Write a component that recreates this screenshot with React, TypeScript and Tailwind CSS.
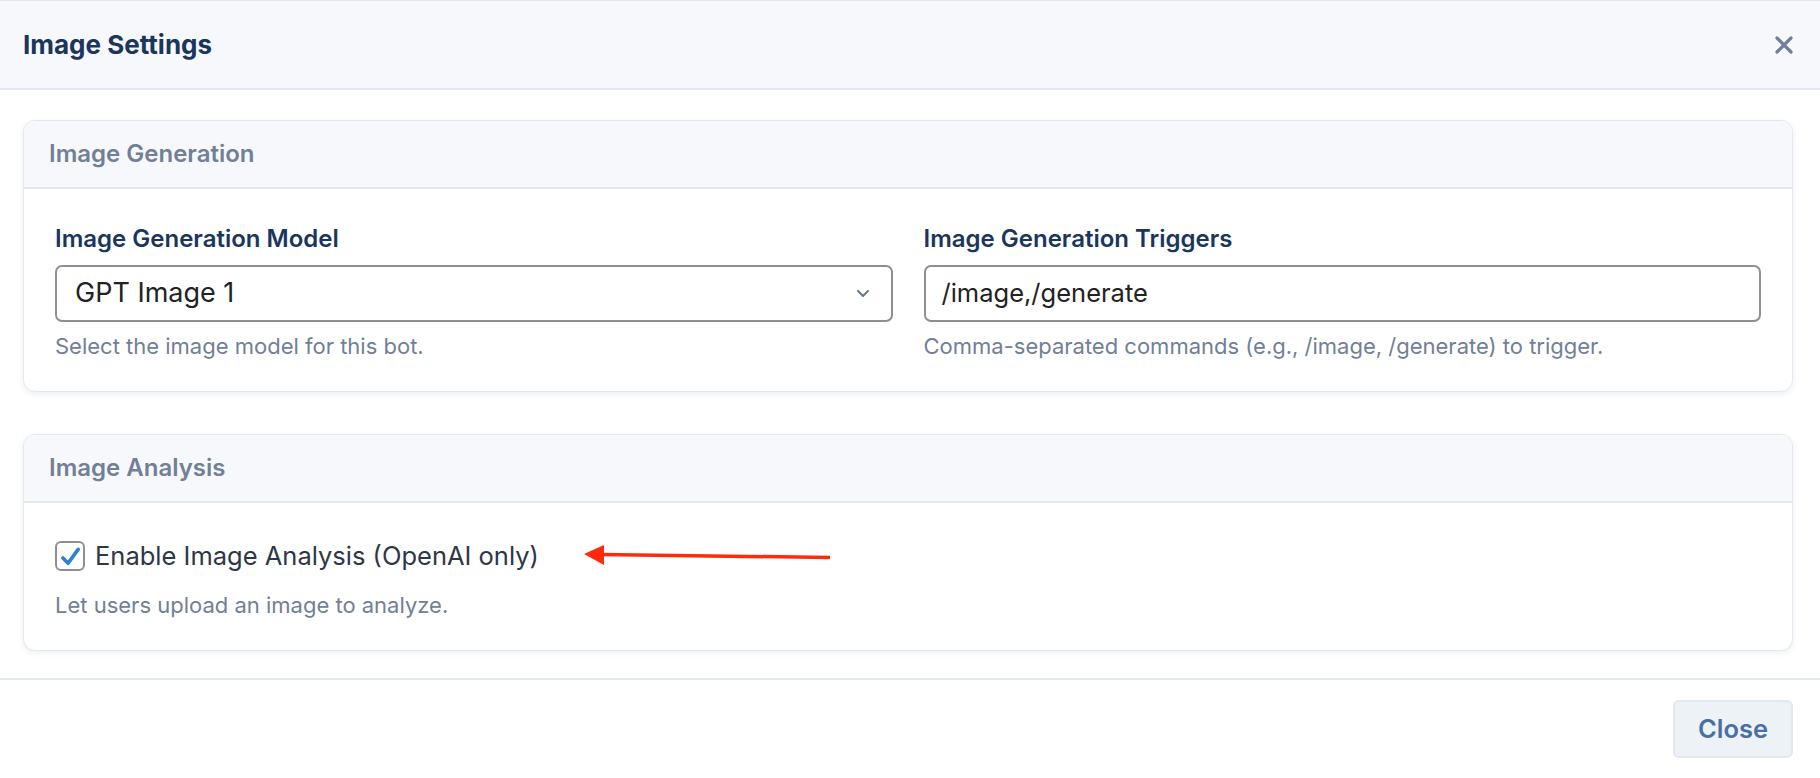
const font = "font-['Inter','Noto_Sans',sans-serif]";

function Card({ title, children }: { title: string; children: React.ReactNode }) {
    return (
        <section className="rounded-[12px] border border-[#e2e8f0] bg-white shadow-[0_2px_6px_rgba(30,50,90,0.08)] overflow-hidden">
            <div className="h-[68px] flex items-center px-[25px] bg-[#f7f8fb] border-b-2 border-[#e2e8f0]">
                <h3 className="text-[24px] font-semibold text-[#718096]">{title}</h3>
            </div>
            {children}
        </section>
    );
}

function Field({ label, hint, children }: { label: string; hint: string; children: React.ReactNode }) {
    return (
        <div className="flex flex-col">
            <label className="text-[24px] leading-[30px] font-semibold text-[#1a365d]">{label}</label>
            <div className="mt-[11px]">{children}</div>
            <p className="mt-[10px] text-[22px] leading-[28px] text-[#718096]">{hint}</p>
        </div>
    );
}

export default function App() {
    return (
        <div className={`w-[1820px] h-[778px] bg-white flex flex-col ${font}`}>
            {/* modal header */}
            <header className="h-[90px] shrink-0 flex items-center justify-between pl-[23px] pr-[27px] bg-[#f7f8fb] border-t border-b-2 border-[#e2e8f0]">
                <h2 className="text-[26px] font-bold text-[#1a365d]">Image Settings</h2>
                <svg viewBox="0 0 18 18" className="w-[18px] h-[18px]">
                    <path d="M2 2 L16 16 M16 2 L2 16" stroke="#718096" strokeWidth={3.2} strokeLinecap="round" />
                </svg>
            </header>

            <main className="flex-1 flex flex-col gap-[42px] pl-[23px] pr-[27px] pt-[30px]">
                <Card title="Image Generation">
                    <div className="grid grid-cols-2 gap-[31px] px-[31px] pt-[35px] pb-[31px]">
                        <Field label="Image Generation Model" hint="Select the image model for this bot.">
                            <div className="h-[57px] flex items-center justify-between rounded-[7px] border-2 border-[#8e8e93] pl-[18px] pr-[22px]">
                                <span className="text-[27px] text-[#222]">GPT Image 1</span>
                                <svg viewBox="0 0 12 7" className="w-[12px] h-[7px]">
                                    <path d="M1 1 L6 6 L11 1" fill="none" stroke="#6b7a90" strokeWidth={2} strokeLinecap="round" strokeLinejoin="round" />
                                </svg>
                            </div>
                        </Field>
                        <Field
                            label="Image Generation Triggers"
                            hint="Comma-separated commands (e.g., /image, /generate) to trigger."
                        >
                            <div className="h-[57px] flex items-center rounded-[7px] border-2 border-[#8e8e93] px-[16px]">
                                <span className="text-[25.5px] text-[#222]">/image,/generate</span>
                            </div>
                        </Field>
                    </div>
                </Card>

                <Card title="Image Analysis">
                    <div className="px-[31px] pt-[38px] pb-[31px]">
                        <div className="flex items-center h-[30px]">
                            <span className="w-[30px] h-[30px] rounded-[6px] border-2 border-[#8e8e93] bg-white flex items-center justify-center">
                                <svg viewBox="0 0 24 24" className="w-[23px] h-[23px]">
                                    <path
                                        d="M4 13.5 L9.5 19 L20 4.5"
                                        fill="none"
                                        stroke="#2f80d1"
                                        strokeWidth={3.8}
                                        strokeLinecap="round"
                                        strokeLinejoin="round"
                                    />
                                </svg>
                            </span>
                            <span className="ml-[10px] text-[25.5px] text-[#2d3748]">Enable Image Analysis (OpenAI only)</span>
                            {/* annotation arrow */}
                            <svg viewBox="0 0 246 22" className="ml-[45px] w-[246px] h-[22px]">
                                <path d="M17 9.5 L246 12.5" stroke="#ff2a0a" strokeWidth={3.5} fill="none" />
                                <polygon points="0,9 20,0 20,20" fill="#ff2a0a" />
                            </svg>
                        </div>
                        <p className="mt-[20px] text-[22px] leading-[28px] text-[#718096]">
                            Let users upload an image to analyze.
                        </p>
                    </div>
                </Card>
            </main>

            <footer className="h-[100px] shrink-0 flex items-center justify-end pr-[27px] border-t-2 border-[#e2e8f0]">
                <button className="w-[120px] h-[58px] rounded-[6px] bg-[#edf2f7] border-2 border-[#e2e8f0] text-[25.5px] font-semibold text-[#4a6fa5]">
                    Close
                </button>
            </footer>
        </div>
    );
}
